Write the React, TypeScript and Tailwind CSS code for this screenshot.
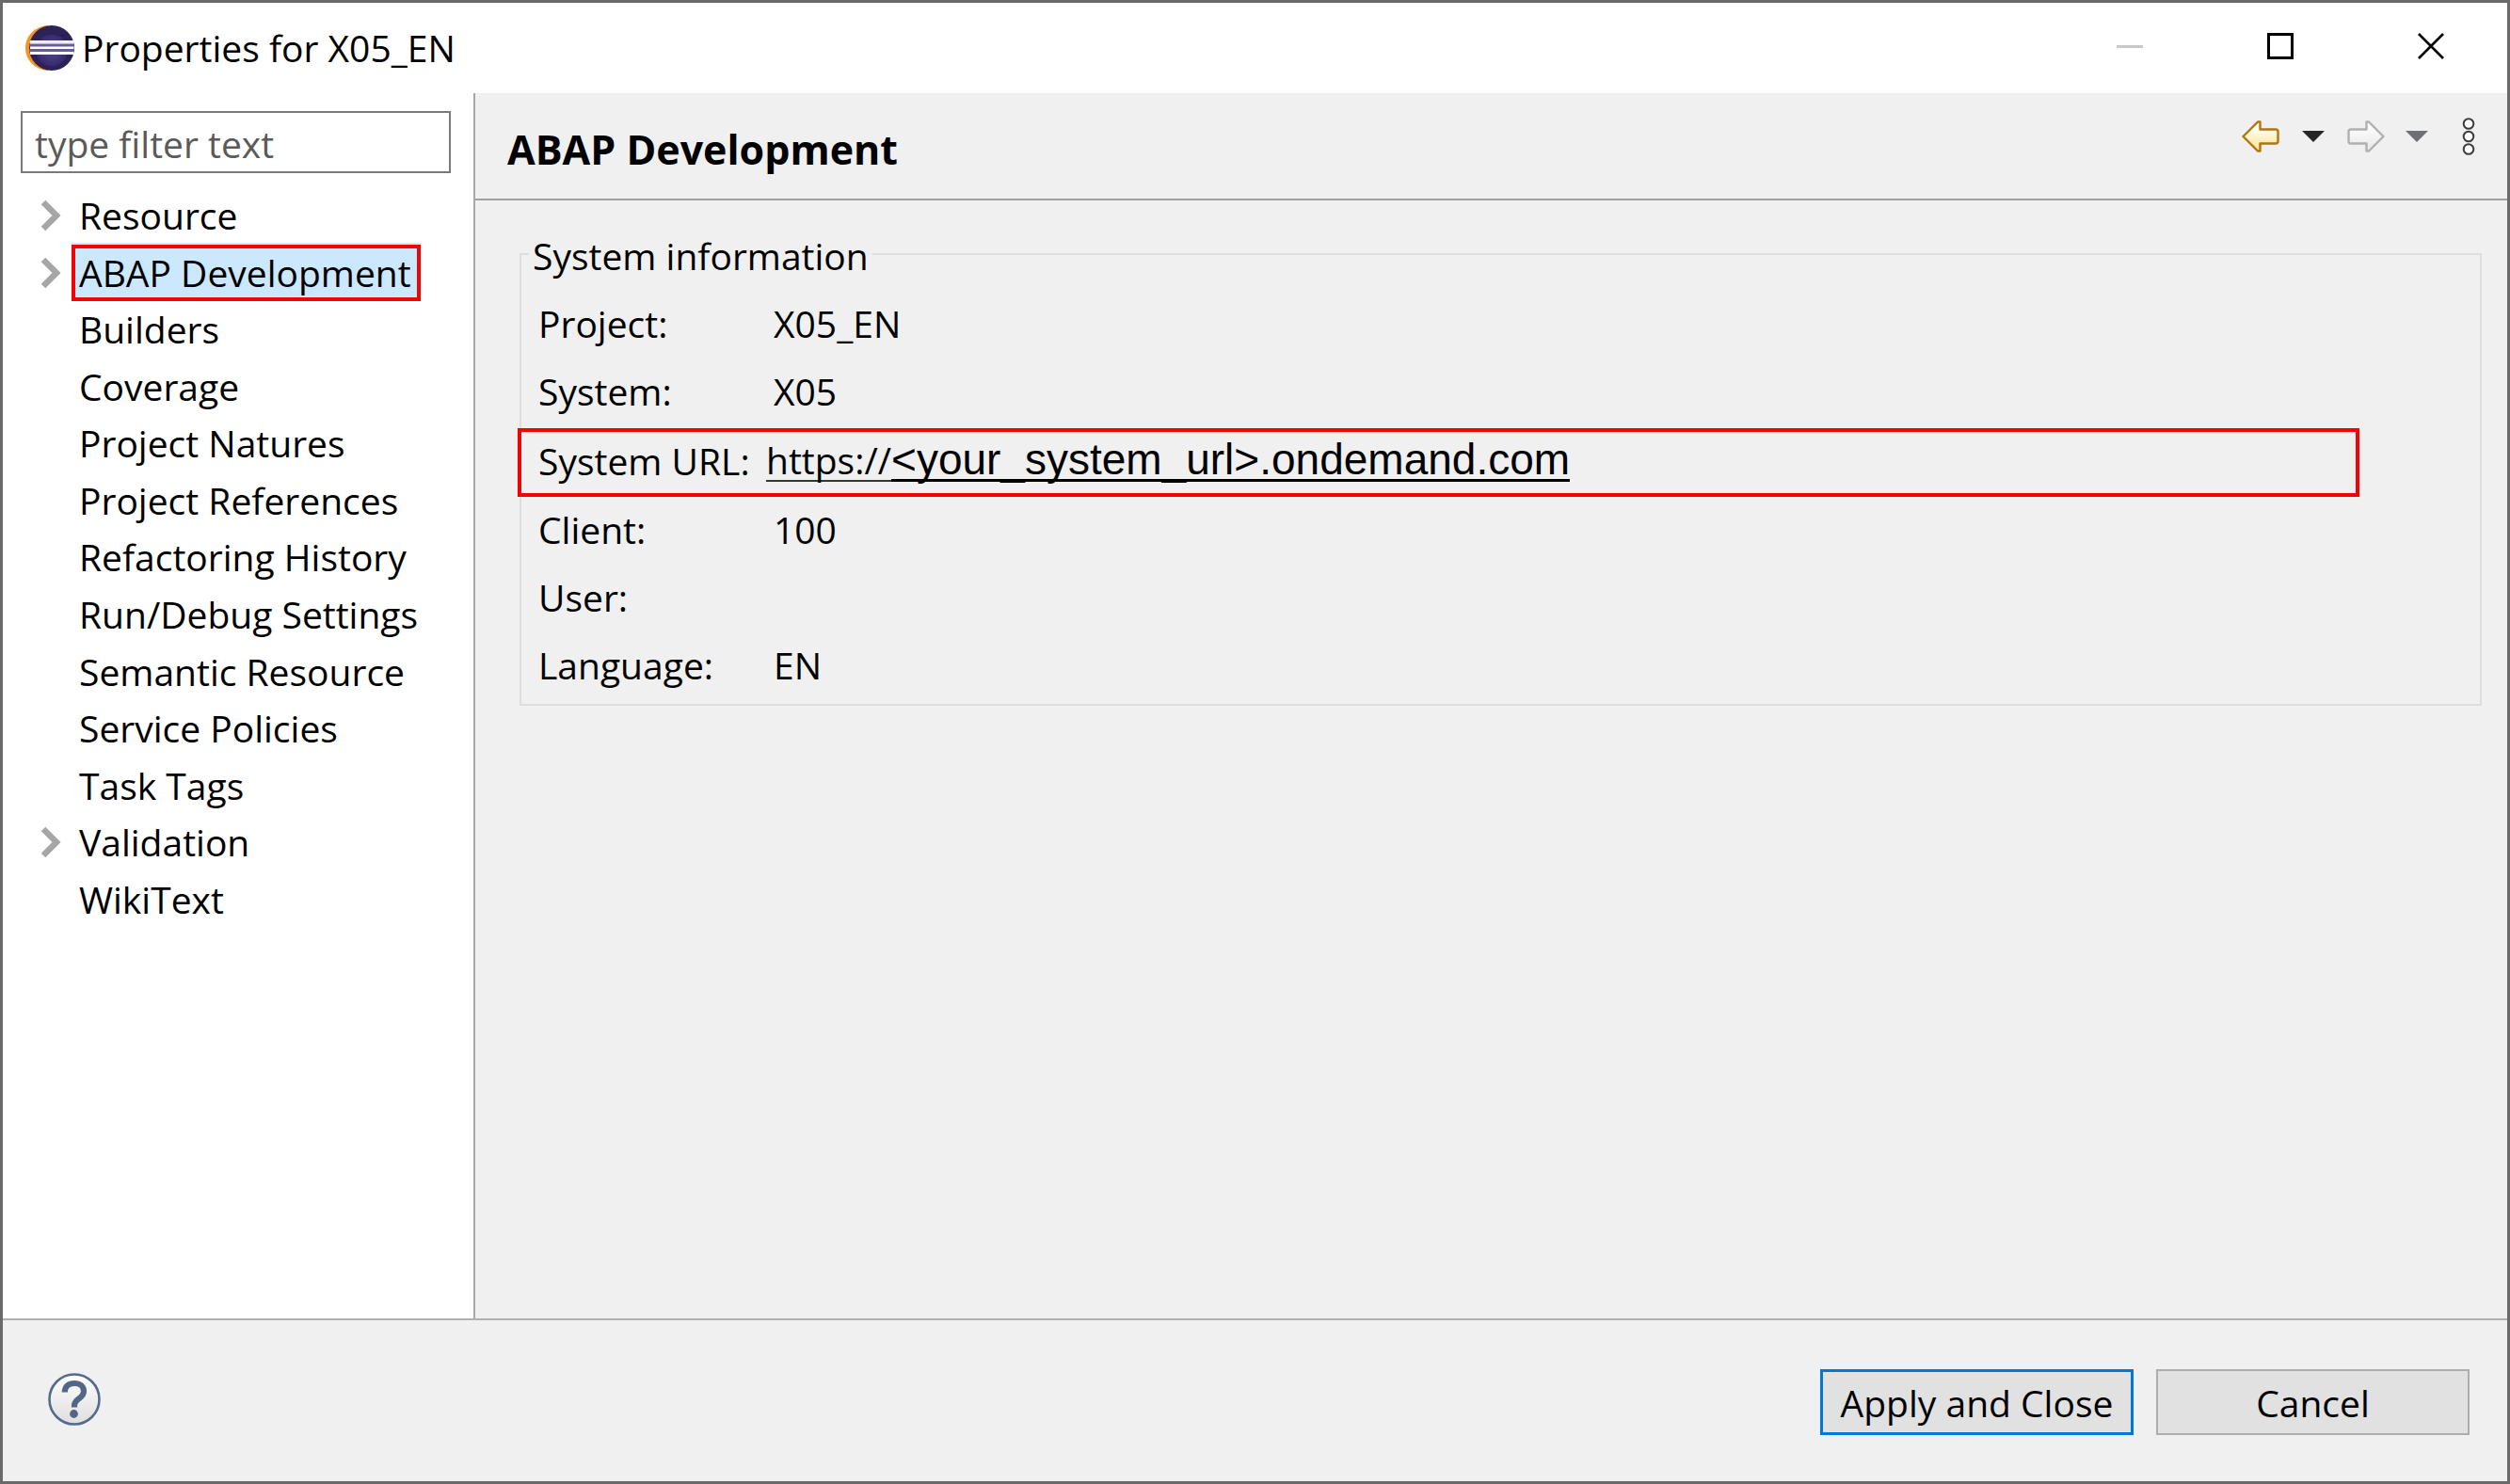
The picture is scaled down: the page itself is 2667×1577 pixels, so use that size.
import React from "react";

type TreeEntry = { label: string; expandable?: boolean; selected?: boolean };

const entries: TreeEntry[] = [
  { label: "Resource", expandable: true },
  { label: "ABAP Development", expandable: true, selected: true },
  { label: "Builders" },
  { label: "Coverage" },
  { label: "Project Natures" },
  { label: "Project References" },
  { label: "Refactoring History" },
  { label: "Run/Debug Settings" },
  { label: "Semantic Resource" },
  { label: "Service Policies" },
  { label: "Task Tags" },
  { label: "Validation", expandable: true },
  { label: "WikiText" },
];

function EclipseLogo() {
  return (
    <svg width="52" height="50" viewBox="0 0 52 50" aria-hidden="true">
      <defs>
        <radialGradient id="globe" cx="0.5" cy="0.55" r="0.5">
          <stop offset="0.3" stopColor="#4a3a8c" />
          <stop offset="0.68" stopColor="#372a6c" />
          <stop offset="0.72" stopColor="#2c2255" />
        </radialGradient>
      </defs>
      <path d="M24 1C10 2 0 12 0 25s10 23 24 24z" fill="#f7941e" />
      <ellipse cx="28" cy="25" rx="24" ry="24" fill="url(#globe)" />
      <path d="M5 17h46.500v15H5z" fill="#fff" />
      <path d="M4 18.500h47v1H4z" fill="#d9d5e6" />
      <path d="M4 20.500h48v3H4zM4 26h48v3H4z" fill="#6a5c96" />
    </svg>
  );
}

function Chevron() {
  return (
    <svg width="22" height="34" viewBox="0 0 22 34" aria-hidden="true">
      <path d="M3 3l14 14-14 14" fill="none" stroke="#a6a6a6" strokeWidth="6.500" />
    </svg>
  );
}

function Arrow({ stroke, from, to, id, flip }: { stroke: string; from: string; to: string; id: string; flip?: boolean }) {
  return (
    <svg width="40" height="34" viewBox="0 0 40 34" className={flip ? "-scale-x-100" : ""} aria-hidden="true">
      <defs>
        <linearGradient id={id} x1="0" y1="0" x2="0" y2="1">
          <stop offset="0.25" stopColor={from} />
          <stop offset="0.8" stopColor={to} />
        </linearGradient>
      </defs>
      <path
        d="M1.500 17L17 1.500h2.500V9.500H36q2.500 0 2.500 2.500v10q0 2.500-2.500 2.500H19.500V32.500H17z"
        fill={`url(#${id})`}
        stroke={stroke}
        strokeWidth="2.400"
        strokeLinejoin="round"
      />
    </svg>
  );
}

function Triangle({ color }: { color: string }) {
  return (
    <svg width="24" height="12" viewBox="0 0 24 12" aria-hidden="true">
      <path d="M0 0h24L12 12z" fill={color} />
    </svg>
  );
}

function TitleBar() {
  return (
    <header className="flex h-24 items-center bg-white pr-px">
      <div className="flex flex-1 items-center gap-2 pl-6">
        <EclipseLogo />
        <h1 className="leading-[48px]">Properties for X05_EN</h1>
      </div>
      <button aria-label="Minimize" disabled className="flex h-full w-40 items-center justify-center pb-1">
        <span className="h-[3px] w-7 bg-[#c8c8c8]" />
      </button>
      <button aria-label="Maximize" className="flex h-full w-40 items-center justify-center pb-1">
        <span className="size-7 border-[3px] border-black" />
      </button>
      <button aria-label="Close" className="flex h-full w-40 items-center justify-center pb-1">
        <svg width="28" height="28" viewBox="0 0 28 28" aria-hidden="true">
          <path d="M1 1l26 26M27 1L1 27" stroke="#000" strokeWidth="2.600" />
        </svg>
      </button>
    </header>
  );
}

function Sidebar() {
  return (
    <nav className="w-[502px] shrink-0 border-r-2 border-[#a8a8a8] bg-white">
      <div className="px-[19px] pt-[19px]">
        <input
          type="text"
          aria-label="Filter"
          placeholder="type filter text"
          className="block h-[66px] w-[457px] border-2 border-[#7a7a7a] bg-white px-[13px] pt-0.5 placeholder:text-[#5a5a5a] placeholder:opacity-100"
        />
      </div>
      <ul className="mt-[15px] flex min-h-[787px] flex-col">
        {entries.map((entry) => (
          <li key={entry.label} className="flex grow basis-0 items-center pl-10">
            <span className="flex w-[33px] shrink-0">
              {entry.expandable && (
                <button aria-label={`Expand ${entry.label}`}>
                  <Chevron />
                </button>
              )}
            </span>
            {entry.selected ? (
              <button className="border-4 border-[#ee0606] bg-[#cce8ff] px-1.5 pl-1 leading-[52px] whitespace-nowrap shadow-[0_-2px_0_#cce8ff]">
                {entry.label}
              </button>
            ) : (
              <button className="px-2 leading-[52px] whitespace-nowrap">{entry.label}</button>
            )}
          </li>
        ))}
      </ul>
    </nav>
  );
}

function PageHeader() {
  return (
    <div className="flex h-[114px] items-start justify-between border-b-2 border-[#a0a0a0] pr-[34px] pl-[34px]">
      <h2 className="pt-[30px] text-[43px] leading-[60px] font-bold">ABAP Development</h2>
      <div className="flex h-[92px] items-center">
        <button aria-label="Back">
          <Arrow id="back" stroke="#b4740c" from="#fffef0" to="#fde9a4" />
        </button>
        <button aria-label="Back history" className="ml-6">
          <Triangle color="#262626" />
        </button>
        <button aria-label="Forward" disabled className="ml-6">
          <Arrow id="forward" stroke="#b0b0b0" from="#fbfbfb" to="#ececec" flip />
        </button>
        <button aria-label="Forward history" disabled className="ml-[22px]">
          <Triangle color="#6f7073" />
        </button>
        <button aria-label="View menu" className="ml-9">
          <svg width="14" height="40" viewBox="0 0 14 40" fill="#fff" stroke="#3c3c3c" strokeWidth="2" aria-hidden="true">
            <circle cx="7" cy="6.500" r="5.300" />
            <circle cx="7" cy="20" r="5.300" />
            <circle cx="7" cy="33.500" r="5.300" />
          </svg>
        </button>
      </div>
    </div>
  );
}

function Row({ label, value }: { label: string; value?: string }) {
  return (
    <div className="flex h-[72px] items-center pl-[18px]">
      <dt className="w-[250px] shrink-0">{label}</dt>
      <dd>{value}</dd>
    </div>
  );
}

function SystemInformation() {
  return (
    <fieldset className="mr-[27px] ml-[47px] border-2 border-[#dedede] pb-[5px]">
      <legend className="ml-2 px-1 pt-1 leading-[52px]">System information</legend>
      <dl className="pt-2.5">
        <Row label="Project:" value="X05_EN" />
        <Row label="System:" value="X05" />
        <div className="mt-[3px] mr-32 -mb-px -ml-1 flex h-[73px] items-center border-4 border-[#ee0606] pb-1 pl-[18px]">
          <dt className="w-[242px] shrink-0">System URL:</dt>
          <dd>
            <a href="#system-url" className="flex items-baseline leading-[44px]">
              <span className="border-b-2 border-[#303830] leading-[42px]">https://</span>
              <span className="border-b-[3px] border-black font-['Liberation_Sans',Arial,sans-serif] text-[46px] leading-[42px]">
                &lt;your_system_url&gt;.ondemand.com
              </span>
            </a>
          </dd>
        </div>
        <Row label="Client:" value="100" />
        <Row label="User:" />
        <Row label="Language:" value="EN" />
      </dl>
    </fieldset>
  );
}

function Footer() {
  return (
    <footer className="flex h-[173px] items-center justify-between border-t-2 border-[#b0b0b0] pr-10 pl-12">
      <button aria-label="Help" className="pb-1">
        <svg width="56" height="56" viewBox="0 0 56 56" aria-hidden="true">
          <defs>
            <linearGradient id="help" x1="0" y1="0" x2="0" y2="1">
              <stop offset="0" stopColor="#fff" />
              <stop offset="1" stopColor="#dedede" />
            </linearGradient>
          </defs>
          <circle cx="28" cy="28" r="26.500" fill="url(#help)" stroke="#556a8c" strokeWidth="2.600" />
          <path
            d="M17.800 20.500C18 14 22 11 28 11s10 3.500 10 8.500c0 8-10 7.500-10 15v2"
            fill="none"
            stroke="#526788"
            strokeWidth="6.200"
          />
          <circle cx="27.500" cy="43.500" r="4.400" fill="#526788" />
        </svg>
      </button>
      <div className="flex gap-6 pt-0.5">
        <button className="h-[70px] w-[333px] border-[3px] border-[#0078d7] bg-[#e1e1e1] pt-0.5">Apply and Close</button>
        <button className="h-[70px] w-[333px] border-2 border-[#adadad] bg-[#e1e1e1] pt-0.5">Cancel</button>
      </div>
    </footer>
  );
}

export default function App() {
  return (
    <div className="flex min-h-screen flex-col border-[3px] border-[#6a6a6a] bg-[#f0f0f0] font-['Open_Sans','Segoe_UI',sans-serif] text-[39px] leading-[52px] text-black">
      <TitleBar />
      <div className="flex flex-1">
        <Sidebar />
        <main className="min-w-0 flex-1">
          <PageHeader />
          <div className="pt-[29px]">
            <SystemInformation />
          </div>
        </main>
      </div>
      <Footer />
    </div>
  );
}
